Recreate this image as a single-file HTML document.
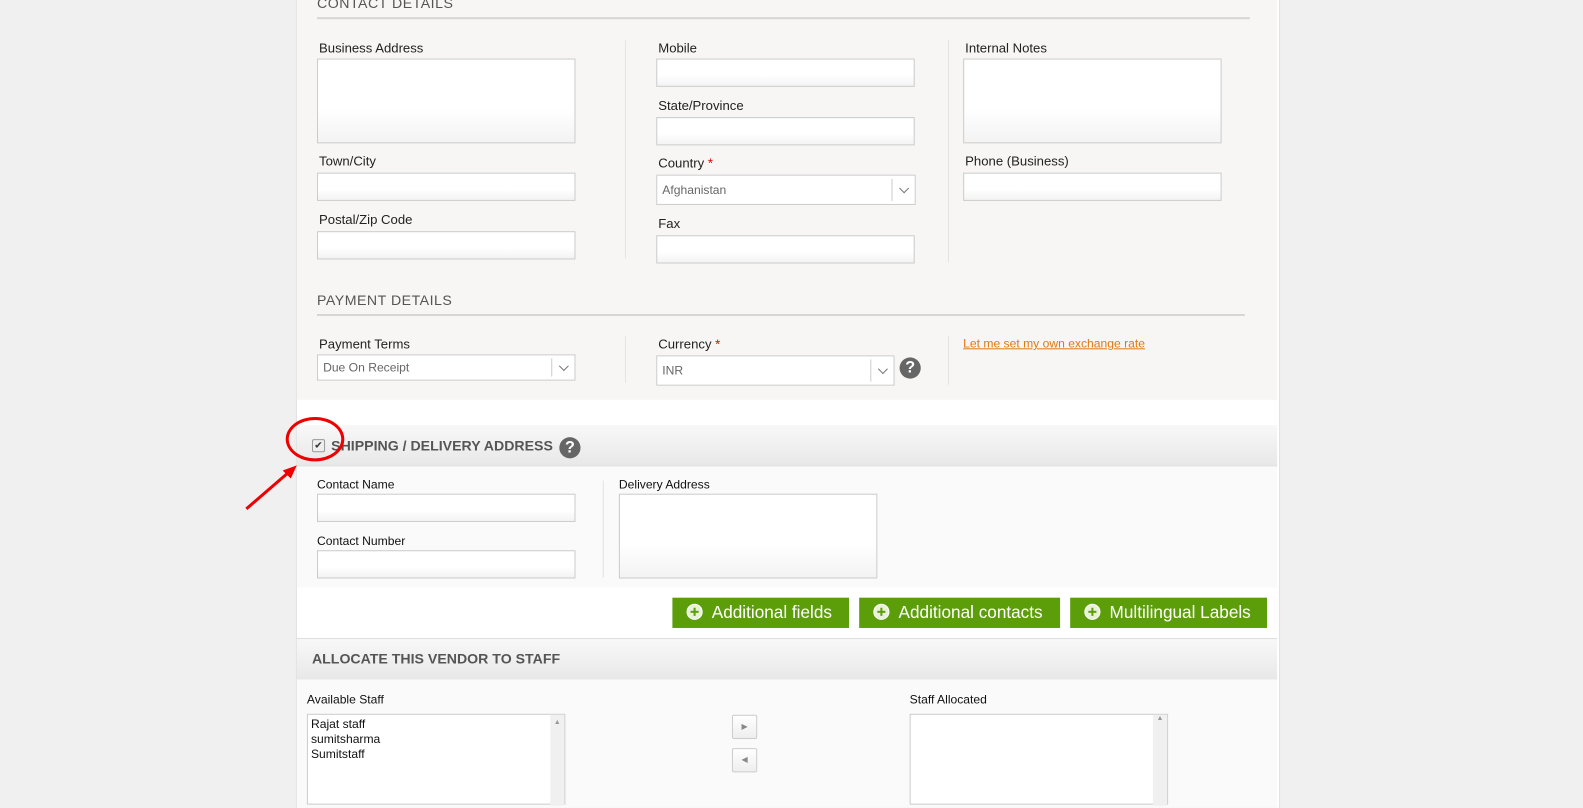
<!DOCTYPE html><html><head><style>
body{margin:0;width:1583px;height:792px;background:#f0f0f0;font-family:"Liberation Sans",sans-serif;position:relative;overflow:hidden}
#w{position:absolute;left:0;top:0;width:1568px;height:800px;transform:scale(1.0096);transform-origin:0 0}
.a{position:absolute}
.l{position:absolute;font-size:13px;color:#222}
.in{position:absolute;border:1px solid #ccc;background:linear-gradient(#fff 60%,#f3f3f3);box-sizing:border-box}
.sel{position:absolute;border:1px solid #ccc;background:#fff;box-sizing:border-box;font-size:12px;color:#666;padding-left:5px}
.sel:after{content:"";position:absolute;right:0;top:3px;bottom:3px;width:22px;border-left:1px solid #ccc}
.sel i{position:absolute;right:7px;top:50%;width:6px;height:6px;border-right:1px solid #777;border-bottom:1px solid #777;transform:translateY(-70%) rotate(45deg)}
.vl{position:absolute;width:1px;background:#e3e3e3}
.q{position:absolute;width:21px;height:21px;border-radius:50%;background:#666;color:#fff;font-weight:bold;font-size:16px;text-align:center;line-height:21px}
.btn{position:absolute;top:592px;height:30px;background:#5c9e0a;color:#fff;font-size:17px;line-height:30px;box-sizing:border-box;padding-left:39px}
.btn b{position:absolute;left:14px;top:6px;width:16px;height:16px;border:1px solid #fff;border-radius:50%;background:#e8f2d8;box-sizing:border-box}
.btn b:before{content:"";position:absolute;left:3px;top:6px;width:8px;height:2px;background:#5c9e0a}
.btn b:after{content:"";position:absolute;left:6px;top:3px;width:2px;height:8px;background:#5c9e0a}
.hd{position:absolute;left:294px;width:971px;height:40px;background:linear-gradient(#f8f8f8,#e8e8e8);border-bottom:1px solid #ddd;font-weight:bold;font-size:14px;color:#555}
</style></head><body><div id="w">
<div class="a" style="left:293px;top:0;width:973px;height:800px;background:#fff;border-left:1px solid #ddd;border-right:1px solid #ddd"></div>
<div class="a" style="left:294px;top:0;width:971px;height:396px;background:#f7f6f4"></div>
<div class="l" style="left:314px;top:-5px;font-size:14px;color:#555;letter-spacing:.5px">CONTACT DETAILS</div>
<div class="a" style="left:314px;top:17px;width:924px;height:2px;background:#d8d6d3"></div>
<div class="l" style="left:316px;top:40px">Business Address</div>
<div class="in" style="left:314px;top:58px;width:256px;height:84px"></div>
<div class="l" style="left:316px;top:152px">Town/City</div>
<div class="in" style="left:314px;top:171px;width:256px;height:28px"></div>
<div class="l" style="left:316px;top:210px">Postal/Zip Code</div>
<div class="in" style="left:314px;top:229px;width:256px;height:28px"></div>
<div class="vl" style="left:619px;top:40px;height:216px"></div>
<div class="l" style="left:652px;top:40px">Mobile</div>
<div class="in" style="left:650px;top:58px;width:256px;height:28px"></div>
<div class="l" style="left:652px;top:97px">State/Province</div>
<div class="in" style="left:650px;top:116px;width:256px;height:28px"></div>
<div class="l" style="left:652px;top:154px">Country <span style="color:#d00">*</span></div>
<div class="sel" style="left:650px;top:173px;width:257px;height:30px;line-height:28px">Afghanistan<i></i></div>
<div class="l" style="left:652px;top:214px">Fax</div>
<div class="in" style="left:650px;top:233px;width:256px;height:28px"></div>
<div class="vl" style="left:939px;top:40px;height:220px"></div>
<div class="l" style="left:956px;top:40px">Internal Notes</div>
<div class="in" style="left:954px;top:58px;width:256px;height:84px"></div>
<div class="l" style="left:956px;top:152px">Phone (Business)</div>
<div class="in" style="left:954px;top:171px;width:256px;height:28px"></div>
<div class="l" style="left:314px;top:289px;font-size:14px;color:#555;letter-spacing:.5px">PAYMENT DETAILS</div>
<div class="a" style="left:314px;top:311px;width:919px;height:2px;background:#d8d6d3"></div>
<div class="l" style="left:316px;top:333px">Payment Terms</div>
<div class="sel" style="left:314px;top:351px;width:256px;height:26px;line-height:25px">Due On Receipt<i></i></div>
<div class="vl" style="left:619px;top:333px;height:46px"></div>
<div class="l" style="left:652px;top:333px">Currency <span style="color:#d00">*</span></div>
<div class="sel" style="left:650px;top:352px;width:236px;height:30px;line-height:28px">INR<i></i></div>
<div class="q" style="left:891px;top:354px">?</div>
<div class="vl" style="left:939px;top:333px;height:48px"></div>
<div class="l" style="left:954px;top:333px;font-size:12px;color:#e07a10;text-decoration:underline">Let me set my own exchange rate</div>
<div class="hd" style="top:421px"><span class="a" style="left:34px;top:12px">SHIPPING / DELIVERY ADDRESS</span></div>
<div class="a" style="left:309px;top:435px;width:11px;height:11px;border:1px solid #999;border-radius:2px;background:#eee;font-size:10px;line-height:11px;text-align:center;color:#333">✔</div>
<div class="q" style="left:554px;top:433px">?</div>
<div class="a" style="left:294px;top:462px;width:971px;height:120px;background:#fafafa"></div>
<div class="l" style="left:314px;top:473px;font-size:12px;color:#111">Contact Name</div>
<div class="in" style="left:314px;top:489px;width:256px;height:28px"></div>
<div class="l" style="left:314px;top:529px;font-size:12px;color:#111">Contact Number</div>
<div class="in" style="left:314px;top:545px;width:256px;height:28px"></div>
<div class="vl" style="left:597px;top:476px;height:96px"></div>
<div class="l" style="left:613px;top:473px;font-size:12px;color:#111">Delivery Address</div>
<div class="in" style="left:613px;top:489px;width:256px;height:84px"></div>
<div class="a" style="left:283px;top:413px;width:58px;height:44px;border:3px solid #e00;border-radius:50%;box-sizing:border-box"></div>
<svg class="a" style="left:240px;top:458px" width="60" height="50"><line x1="4" y1="46" x2="48" y2="8" stroke="#e00" stroke-width="3"/><polygon points="54,3 40,8 48,16" fill="#e00"/></svg>
<div class="btn" style="left:666px;width:175px"><b></b>Additional fields</div>
<div class="btn" style="left:851px;width:199px"><b></b>Additional contacts</div>
<div class="btn" style="left:1060px;width:195px"><b></b>Multilingual Labels</div>
<div class="hd" style="top:632px;border-top:1px solid #ddd"><span class="a" style="left:15px;top:11px">ALLOCATE THIS VENDOR TO STAFF</span></div>
<div class="a" style="left:294px;top:673px;width:971px;height:127px;background:#fafafa"></div>
<div class="l" style="left:304px;top:686px;font-size:12px;color:#111">Available Staff</div>
<div class="a" style="left:304px;top:707px;width:256px;height:90px;border:1px solid #ccc;background:#fff;box-sizing:border-box;font-size:12px;color:#111;padding:2px 3px;line-height:15px">Rajat staff<br>sumitsharma<br>Sumitstaff<div class="a" style="right:0;top:0;width:14px;height:90px;background:#f0f0f0;font-size:7px;color:#999;text-align:center">▲</div></div>
<div class="a" style="left:725px;top:708px;width:25px;height:24px;border:1px solid #ccc;border-radius:2px;background:linear-gradient(#fff,#eee);box-sizing:border-box;font-size:8px;color:#888;text-align:center;line-height:22px">▶</div>
<div class="a" style="left:725px;top:741px;width:25px;height:24px;border:1px solid #ccc;border-radius:2px;background:linear-gradient(#fff,#eee);box-sizing:border-box;font-size:8px;color:#888;text-align:center;line-height:22px">◀</div>
<div class="l" style="left:901px;top:686px;font-size:12px;color:#111">Staff Allocated</div>
<div class="a" style="left:901px;top:707px;width:256px;height:90px;border:1px solid #ccc;background:#fff;box-sizing:border-box"><div class="a" style="right:0;top:0;width:14px;height:90px;background:#f0f0f0;font-size:7px;color:#999;text-align:center">▲</div></div>
</div></body></html>
